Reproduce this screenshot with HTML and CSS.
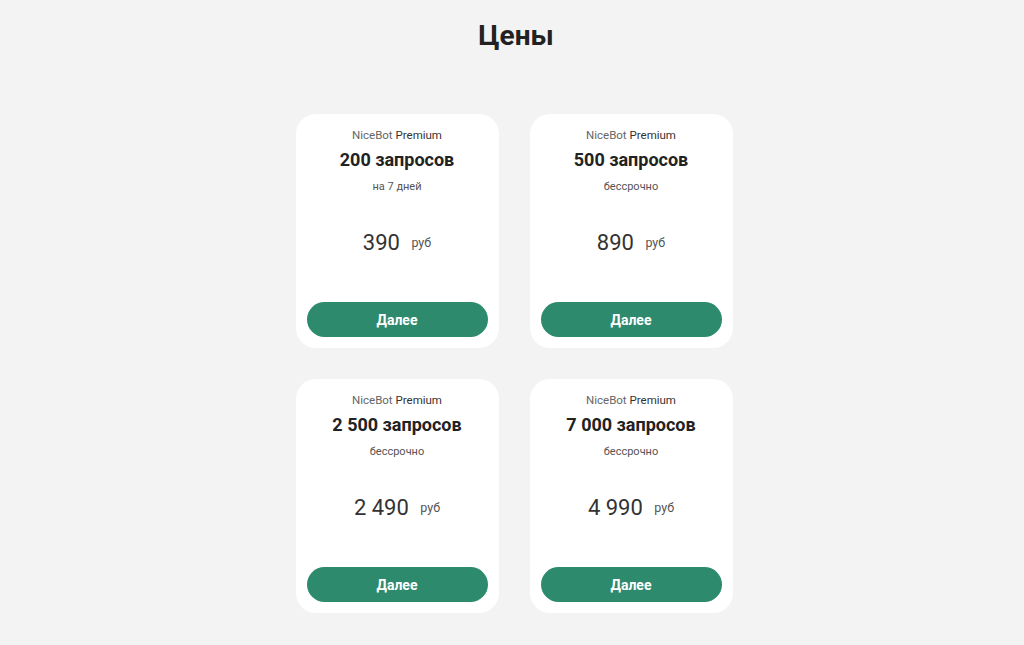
FILE: index.html
```html
<!DOCTYPE html>
<html lang="ru">
<head>
  <meta charset="UTF-8" />
  <meta name="viewport" content="width=device-width, initial-scale=1.0" />
  <title>Цены</title>
  <link rel="stylesheet" href="styles.css">
</head>
<body>
  <section class="prices">
    <h1>Цены</h1>

    <div class="price-grid">
      <!-- 200 requests -->
      <div class="price-card">
        <div class="plan">NiceBot <span>Premium</span></div>
        <div class="amount">200 запросов</div>
        <div class="term">на 7 дней</div>
        <div class="cost">390 <span>руб</span></div>
        <button type="button">Далее</button>
      </div>

      <!-- 500 requests -->
      <div class="price-card">
        <div class="plan">NiceBot <span>Premium</span></div>
        <div class="amount">500 запросов</div>
        <div class="term">бессрочно</div>
        <div class="cost">890 <span>руб</span></div>
        <button type="button">Далее</button>
      </div>

      <!-- 2 500 requests -->
      <div class="price-card">
        <div class="plan">NiceBot <span>Premium</span></div>
        <div class="amount">2 500 запросов</div>
        <div class="term">бессрочно</div>
        <div class="cost">2 490 <span>руб</span></div>
        <button type="button">Далее</button>
      </div>

      <!-- 7 000 requests -->
      <div class="price-card">
        <div class="plan">NiceBot <span>Premium</span></div>
        <div class="amount">7 000 запросов</div>
        <div class="term">бессрочно</div>
        <div class="cost">4 990 <span>руб</span></div>
        <button type="button">Далее</button>
      </div>
    </div>
  </section>
</body>
</html>
```

FILE: styles.css
```css
body {
  font-family: Roboto, "Noto Sans", Arial, sans-serif;
  background: #f2f3f2;
  color: #222;
  margin: 0;
  padding: 0;
}

.prices {
  display: flex;
  flex-direction: column;
  align-items: center;
  padding-top: 18px;
}

.prices h1 {
  margin: 0;
  padding-left: 8px;
  font-size: 28px;
  line-height: 36px;
  font-weight: 700;
  color: #222;
}

.price-grid {
  display: grid;
  grid-template-columns: 203px 203px;
  gap: 31px;
  margin-top: 60px;
  margin-left: 4px;
}

.price-card {
  background: #fff;
  border-radius: 20px;
  height: 234px;
  box-sizing: border-box;
  padding: 13px 11px 11px;
  display: flex;
  flex-direction: column;
  align-items: center;
  text-align: center;
}

.price-card .plan {
  font-size: 11.5px;
  line-height: 16px;
  color: #666;
}

.price-card .plan span {
  color: #333;
}

.price-card .amount {
  margin-top: 5px;
  font-size: 18px;
  line-height: 24px;
  font-weight: 700;
  color: #222;
}

.price-card .term {
  margin-top: 7px;
  font-size: 11px;
  line-height: 16px;
  color: #555;
}

.price-card .cost {
  margin-top: 33px;
  font-size: 22px;
  line-height: 30px;
  color: #333;
}

.price-card .cost span {
  font-size: 12.5px;
  color: #555;
  margin-left: 6px;
  vertical-align: 3px;
}

.price-card button {
  margin-top: auto;
  width: 100%;
  height: 35px;
  background-color: #2d8a6d;
  color: #fff;
  border: none;
  border-radius: 18px;
  font-family: inherit;
  font-size: 14px;
  font-weight: 700;
  cursor: pointer;
}

.price-card button:hover {
  background-color: #257559;
}
```
